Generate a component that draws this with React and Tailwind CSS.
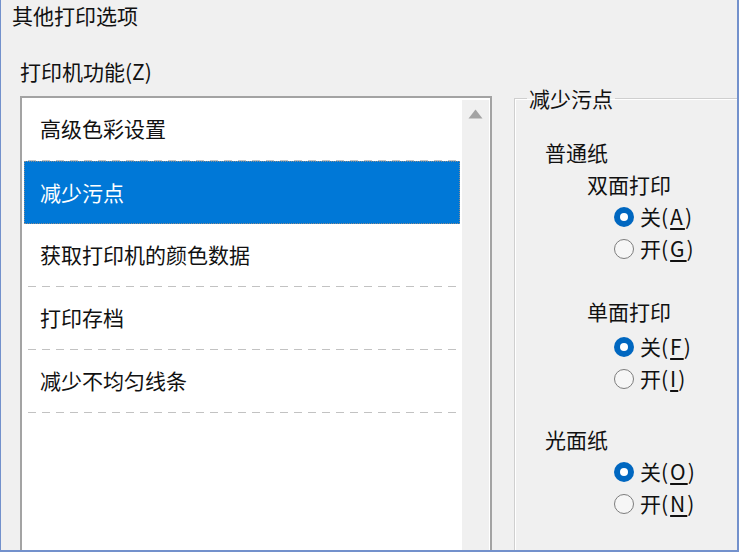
import React from 'react';

// ─── Data ────────────────────────────────────────────────────────────────────
const features = ['高级色彩设置', '减少污点', '获取打印机的颜色数据', '打印存档', '减少不均匀线条'];

// ─── Radio ───────────────────────────────────────────────────────────────────
function Radio({ checked, label, hotkey }) {
    return (
        <div className="flex items-center h-[32px] pl-[99px]">
            {checked ? (
                <span className="w-[20px] h-[20px] rounded-full bg-[#0067c0] flex items-center justify-center">
                    <span className="w-[8px] h-[8px] rounded-full bg-white" />
                </span>
            ) : (
                <span className="w-[20px] h-[20px] rounded-full border-[1.5px] border-[#7d7d7d] bg-[#f6f6f6]" />
            )}
            <span className="ml-[6px]">
                {label}
                <span className="tracking-[2px]">(<span className="underline underline-offset-[3px]">{hotkey}</span>)</span>
            </span>
        </div>
    );
}

// ─── ListItem ────────────────────────────────────────────────────────────────
function ListItem({ text, selected }) {
    if (selected) {
        return (
            <div className="h-[63px] mx-[2px] flex items-center pl-[15px] bg-[#0078d7] text-white border border-dotted border-[#8c8c8c]">
                {text}
            </div>
        );
    }
    return (
        <div className="h-[63px] mx-[2px] flex flex-col">
            <div className="flex-1 flex items-center pl-[16px]">{text}</div>
            <div className="h-px mx-[4px] bg-[repeating-linear-gradient(to_right,#c2c2c2_0_8px,transparent_8px_14px)]" />
        </div>
    );
}

export default function App() {
    return (
        <div className="w-[739px] h-[552px] overflow-hidden bg-[#f0f0f0] border-l border-r-2 border-b-2 border-[#7391cc] text-[21px] text-[#111] font-['Noto_Sans_CJK_SC','Microsoft_YaHei',sans-serif]">
            {/* Title */}
            <div className="h-[30px] leading-[30px] pl-[11px]">其他打印选项</div>

            <div className="flex">
                {/* Feature list */}
                <div className="w-[491px] pl-[19px] shrink-0">
                    <div className="h-[30px] leading-[30px] mt-[26px]">打印机功能(Z)</div>
                    <div className="mt-[10px] h-[480px] border-2 border-[#a3a3a3] bg-white flex">
                        <div className="flex-1">
                            {features.map((f, i) => (
                                <ListItem key={f} text={f} selected={i === 1} />
                            ))}
                        </div>
                        <div className="w-[27px] mt-[2px] mr-[1px] bg-[#f0f0f0] flex justify-center pt-[9px]">
                            <svg width="15" height="10" viewBox="0 0 15 10">
                                <path d="M7.5 0.5 L14.5 9.5 L0.5 9.5 Z" fill="#a3a3a3" />
                            </svg>
                        </div>
                    </div>
                </div>

                {/* Group box */}
                <fieldset className="flex-1 ml-[22px] mt-[56px] border-l border-t border-[#cfcfcf] shadow-[inset_1px_1px_0_#ffffff]">
                    <legend className="ml-[12px] px-[2px] leading-[24px]">减少污点</legend>
                    <div className="pt-[27px]">
                        <div className="h-[32px] flex items-center pl-[30px]">普通纸</div>
                        <div className="h-[32px] flex items-center pl-[72px]">双面打印</div>
                        <Radio checked label="关" hotkey="A" />
                        <Radio label="开" hotkey="G" />

                        <div className="h-[32px] flex items-center pl-[72px] mt-[31px]">单面打印</div>
                        <div className="mt-[3px]">
                            <Radio checked label="关" hotkey="F" />
                            <Radio label="开" hotkey="I" />
                        </div>

                        <div className="h-[32px] flex items-center pl-[30px] mt-[29px]">光面纸</div>
                        <Radio checked label="关" hotkey="O" />
                        <Radio label="开" hotkey="N" />
                    </div>
                </fieldset>
            </div>
        </div>
    );
}
